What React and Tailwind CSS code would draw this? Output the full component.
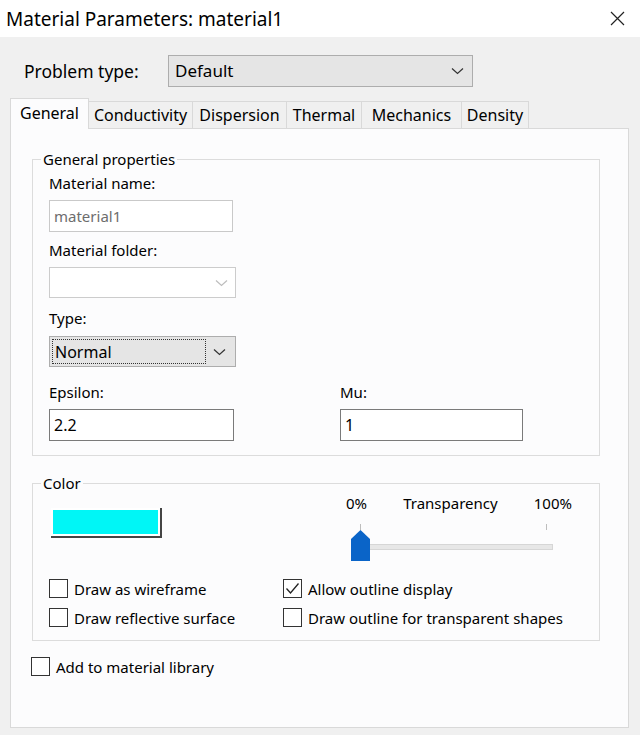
import React from 'react';

const Chevron = ({ className = 'text-[#333]' }) => (
  <svg width="13" height="8" viewBox="0 0 13 8" className={className}>
    <path d="M1 1.5 L6.5 6.5 L12 1.5" fill="none" stroke="currentColor" strokeWidth="1.2" />
  </svg>
);

const Checkbox = ({ checked, label }) => (
  <div className="flex h-[19px] items-center gap-[6px]">
    <span className="flex h-[19px] w-[19px] shrink-0 items-center justify-center border border-[#333] bg-white">
      {checked && (
        <svg width="15" height="13" viewBox="0 0 15 13">
          <path d="M1.5 6.5 L5.5 11 L13.5 1.5" fill="none" stroke="#222" strokeWidth="1.3" />
        </svg>
      )}
    </span>
    <span className="leading-[20px]">{label}</span>
  </div>
);

const tabs = [
  { name: 'General', w: 'w-[79px]' },
  { name: 'Conductivity', w: 'w-[104px]' },
  { name: 'Dispersion', w: 'w-[94px]' },
  { name: 'Thermal', w: 'w-[75px]' },
  { name: 'Mechanics', w: 'w-[100px]' },
  { name: 'Density', w: 'w-[67px]' },
];

export default function App() {
  return (
    <div className="h-[735px] w-[640px] overflow-hidden bg-[#f0f0f0] font-['Noto_Sans',sans-serif] text-[15px] text-black">
      {/* title bar */}
      <div className="flex h-[37px] items-center justify-between bg-white pl-[6px] pr-[15px]">
        <span className="text-[19px] leading-[24px]">Material Parameters: material1</span>
        <svg width="15" height="15" viewBox="0 0 15 15">
          <path d="M1 1 L14 14 M14 1 L1 14" stroke="#222" strokeWidth="1.2" />
        </svg>
      </div>

      {/* problem type */}
      <div className="mt-[18px] flex items-center">
        <span className="ml-[24px] w-[144px] text-[17.5px]">Problem type:</span>
        <div className="flex h-[32px] w-[305px] items-center justify-between border border-[#adadad] bg-[#e5e5e5] pl-[6px] pr-[8px]">
          <span className="text-[17px]">Default</span>
          <Chevron />
        </div>
      </div>

      {/* tabs */}
      <div className="mt-[11px] ml-[10px] flex items-end">
        {tabs.map((t, i) =>
          i === 0 ? (
            <div
              key={t.name}
              className={`relative z-10 -mb-px flex h-[31px] ${t.w} items-center justify-center border border-b-0 border-[#d9d9d9] bg-[#fcfcfd] pb-[2px] text-[16px]`}
            >
              {t.name}
            </div>
          ) : (
            <div
              key={t.name}
              className={`flex h-[27px] ${t.w} items-center justify-center border border-b-0 border-l-0 border-[#d9d9d9] bg-[#f0f0f0] text-[16px]`}
            >
              {t.name}
            </div>
          )
        )}
      </div>

      {/* panel */}
      <div className="ml-[10px] h-[600px] w-[619px] border border-[#d9d9d9] bg-[#fcfcfd]">
        <fieldset className="ml-[21px] mt-[20px] w-[568px] border border-[#dcdcdc] px-[16px] pb-[14px]">
          <legend className="-ml-[8px] px-[2px] leading-[20px]">General properties</legend>
          <div className="mt-[4px] leading-[20px]">Material name:</div>
          <div className="mt-[7px] flex h-[32px] w-[184px] items-center border border-[#c9c9c9] bg-white px-[4px] text-[#6d6d6d]">
            material1
          </div>
          <div className="mt-[8px] leading-[20px]">Material folder:</div>
          <div className="mt-[7px] flex h-[31px] w-[187px] items-center justify-end border border-[#cccccc] bg-white pr-[7px]">
            <Chevron className="text-[#bdbdbd]" />
          </div>
          <div className="mt-[10px] leading-[20px]">Type:</div>
          <div className="mt-[8px] flex h-[31px] w-[187px] items-center border border-[#adadad] bg-[#e5e5e5] p-[2px]">
            <div className="flex h-full w-[154px] items-center border border-dotted border-[#333] pl-[2px] text-[16px]">Normal</div>
            <div className="flex flex-1 justify-center">
              <Chevron />
            </div>
          </div>
          <div className="mt-[15px] flex">
            <div className="w-[291px]">
              <div className="leading-[20px]">Epsilon:</div>
              <div className="mt-[7px] flex h-[32px] w-[185px] items-center border border-[#7a7a7a] bg-white px-[4px] text-[16px]">2.2</div>
            </div>
            <div>
              <div className="leading-[20px]">Mu:</div>
              <div className="mt-[7px] flex h-[32px] w-[183px] items-center border border-[#7a7a7a] bg-white px-[4px] text-[16px]">1</div>
            </div>
          </div>
        </fieldset>

        <fieldset className="ml-[21px] mt-[17px] w-[568px] border border-[#dcdcdc] px-[16px] pb-[13px]">
          <legend className="-ml-[8px] px-[2px] leading-[20px]">Color</legend>
          <div className="flex items-start">
            <div className="w-[297px] pt-[15px]">
              <div className="ml-[2px] h-[30px] w-[111px] border-r-2 border-b-2 border-[#444] bg-white p-[2px]">
                <div className="h-full w-full bg-[#00f6f6]" />
              </div>
            </div>
            <div className="w-[226px]">
              <div className="flex justify-between leading-[20px]">
                <span>0%</span>
                <span>Transparency</span>
                <span>100%</span>
              </div>
              <div className="mt-[11px] flex h-[6px]">
                <div className="ml-[14px] w-px bg-[#bdbdbd]" />
                <div className="ml-[185px] w-px bg-[#bdbdbd]" />
              </div>
              <div className="relative h-[31px] pt-[14px]">
                <div className="ml-[14px] h-[6px] w-[193px] border border-[#d6d6d6] bg-[#e7e7e7]" />
                <svg className="absolute left-[5px] top-0" width="19" height="31" viewBox="0 0 19 31">
                  <path d="M0 9 L9.5 0 L19 9 L19 31 L0 31 Z" fill="#0a64c8" />
                </svg>
              </div>
            </div>
          </div>
          <div className="mt-[18px] grid grid-cols-[234px_1fr] gap-y-[10px]">
            <Checkbox label="Draw as wireframe" />
            <Checkbox checked label="Allow outline display" />
            <Checkbox label="Draw reflective surface" />
            <Checkbox label="Draw outline for transparent shapes" />
          </div>
        </fieldset>

        <div className="ml-[20px] mt-[16px]">
          <Checkbox label="Add to material library" />
        </div>
      </div>
    </div>
  );
}
